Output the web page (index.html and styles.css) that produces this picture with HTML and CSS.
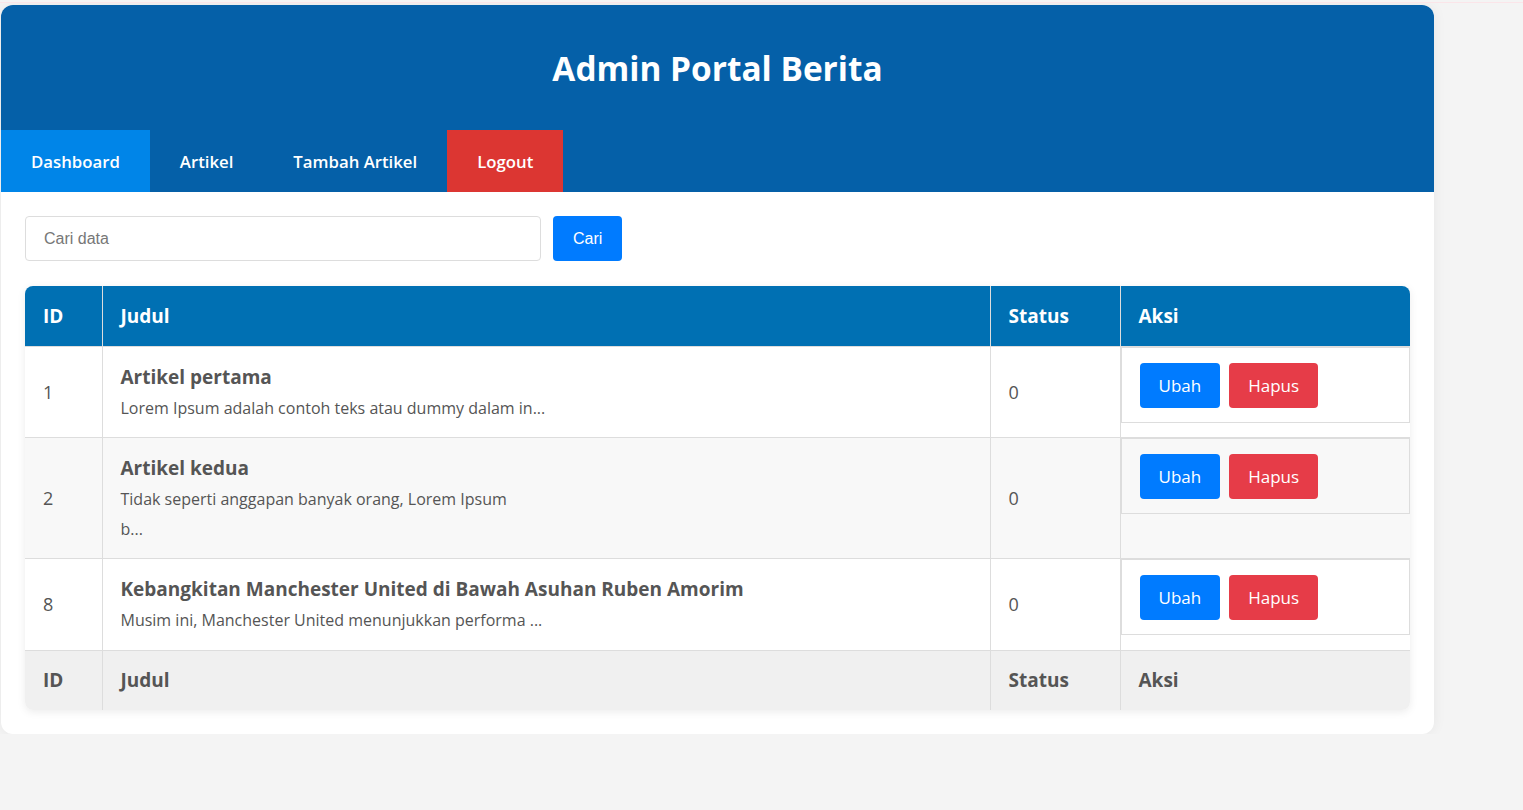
FILE: index.html
```html
<!DOCTYPE html>
<html lang="id">
<head>
<meta charset="utf-8">
<title>Admin Portal Berita</title>
<link rel="stylesheet" href="styles.css">
</head>
<body>
<div class="container">
  <header class="header">
    <h1 class="title">Admin Portal Berita</h1>
    <nav class="nav">
      <a class="nav-item active" href="#">Dashboard</a>
      <a class="nav-item" href="#">Artikel</a>
      <a class="nav-item" href="#">Tambah Artikel</a>
      <a class="nav-item logout" href="#">Logout</a>
    </nav>
  </header>
  <main class="content">
    <form class="search">
      <input class="search-input" type="text" placeholder="Cari data">
      <button class="search-btn" type="button">Cari</button>
    </form>
    <table class="data-table">
      <thead>
        <tr>
          <th class="col-id">ID</th>
          <th class="col-judul">Judul</th>
          <th class="col-status">Status</th>
          <th class="col-aksi">Aksi</th>
        </tr>
      </thead>
      <tbody>
        <tr>
          <td class="cell-id">1</td>
          <td class="cell-judul">
            <div class="art-title">Artikel pertama</div>
            <div class="art-desc">Lorem Ipsum adalah contoh teks atau dummy dalam in...</div>
          </td>
          <td class="cell-status">0</td>
          <td class="cell-aksi">
            <div class="aksi-box">
              <a class="btn btn-edit" href="#">Ubah</a>
              <a class="btn btn-del" href="#">Hapus</a>
            </div>
          </td>
        </tr>
        <tr>
          <td class="cell-id">2</td>
          <td class="cell-judul">
            <div class="art-title">Artikel kedua</div>
            <div class="art-desc">Tidak seperti anggapan banyak orang, Lorem Ipsum<br>b...</div>
          </td>
          <td class="cell-status">0</td>
          <td class="cell-aksi">
            <div class="aksi-box">
              <a class="btn btn-edit" href="#">Ubah</a>
              <a class="btn btn-del" href="#">Hapus</a>
            </div>
          </td>
        </tr>
        <tr>
          <td class="cell-id">8</td>
          <td class="cell-judul">
            <div class="art-title">Kebangkitan Manchester United di Bawah Asuhan Ruben Amorim</div>
            <div class="art-desc">Musim ini, Manchester United menunjukkan performa ...</div>
          </td>
          <td class="cell-status">0</td>
          <td class="cell-aksi">
            <div class="aksi-box">
              <a class="btn btn-edit" href="#">Ubah</a>
              <a class="btn btn-del" href="#">Hapus</a>
            </div>
          </td>
        </tr>
      </tbody>
      <tfoot>
        <tr>
          <th>ID</th>
          <th>Judul</th>
          <th>Status</th>
          <th>Aksi</th>
        </tr>
      </tfoot>
    </table>
  </main>
</div>
</body>
</html>
```

FILE: styles.css
```css
html {
  background: #f4f4f4;
}
body {
  margin: 2px 0 0;
  border-top: 1px solid #fbe5e9;
  padding-top: 2px;
  font-family: "Open Sans", "Noto Sans", sans-serif;
  color: #555;
}
.container {
  width: 1433px;
  margin-left: 1px;
  background: #fff;
  border-radius: 12px;
  box-shadow: 0 0 14px rgba(0, 0, 0, 0.06);
  overflow: hidden;
}
.header {
  background: #0560a8;
}
.title {
  margin: 0;
  height: 125px;
  display: flex;
  align-items: center;
  justify-content: center;
  color: #fff;
  font-size: 33.4px;
  font-weight: 700;
}
.nav {
  display: flex;
  height: 62px;
}
.nav-item {
  display: flex;
  align-items: center;
  padding: 0 30px;
  color: #fff;
  text-decoration: none;
  font-size: 16.75px;
  font-weight: 600;
}
.nav-item.active {
  background: #0085e8;
}
.nav-item.logout {
  background: #dc3632;
}
.content {
  padding: 24px 24px 24px;
}
.search {
  display: flex;
  gap: 12px;
  margin: 0 0 25px;
}
.search-input {
  width: 516px;
  height: 45px;
  box-sizing: border-box;
  border: 1px solid #ddd;
  border-radius: 4px;
  padding: 0 18px;
  font-family: "Liberation Sans", Arial, sans-serif;
  font-size: 16px;
  color: #333;
}
.search-input::placeholder {
  color: #777;
}
.search-btn {
  height: 45px;
  padding: 0 20px;
  border: none;
  border-radius: 4px;
  background: #007bff;
  color: #fff;
  font-family: "Liberation Sans", Arial, sans-serif;
  font-size: 16px;
}
.data-table {
  width: 100%;
  border-collapse: collapse;
  border-radius: 8px;
  overflow: hidden;
  box-shadow: 0 2px 8px rgba(0, 0, 0, 0.08);
}
.data-table th,
.data-table td {
  border: 1px solid #ddd;
  text-align: left;
}
.data-table th {
  height: 60px;
  box-sizing: border-box;
  padding: 0 18px;
  font-size: 19px;
  font-weight: 700;
}
.data-table thead th {
  background: #0070b3;
  color: #fff;
  border-top: none;
}
.data-table thead th:first-child,
.data-table tfoot th:first-child,
.data-table td:first-child {
  border-left: none;
}
.data-table thead th:last-child,
.data-table tfoot th:last-child {
  border-right: none;
}
.data-table tfoot th {
  background: #f0f0f0;
  color: #555;
  border-bottom: none;
}
.col-id { width: 77px; }
.col-status { width: 130px; }
.col-aksi { width: 290px; }
.data-table tbody tr:nth-child(even) {
  background: #f8f8f8;
}
.cell-id,
.cell-status {
  padding: 0 18px;
  font-size: 18px;
  vertical-align: middle;
}
.cell-judul {
  padding: 17px 18px 14px;
  vertical-align: top;
}
.data-table tbody tr:last-child .cell-judul {
  padding-bottom: 15px;
}
.art-title {
  font-size: 19px;
  font-weight: 700;
  line-height: 27px;
  margin-bottom: 2px;
}
.art-desc {
  font-size: 16px;
  line-height: 30px;
}
.data-table td.cell-aksi {
  padding: 0;
  border: none;
  border-bottom: 1px solid #ddd;
  vertical-align: top;
}
.aksi-box {
  display: flex;
  gap: 9px;
  padding: 15px 18px 14px;
  border: 1px solid #ddd;
}
.btn {
  display: inline-block;
  padding: 10px 19px;
  line-height: 25px;
  font-size: 17px;
  border-radius: 4px;
  color: #fff;
  text-decoration: none;
}
.btn-edit {
  background: #007bff;
}
.btn-del {
  background: #e63c48;
}
```
